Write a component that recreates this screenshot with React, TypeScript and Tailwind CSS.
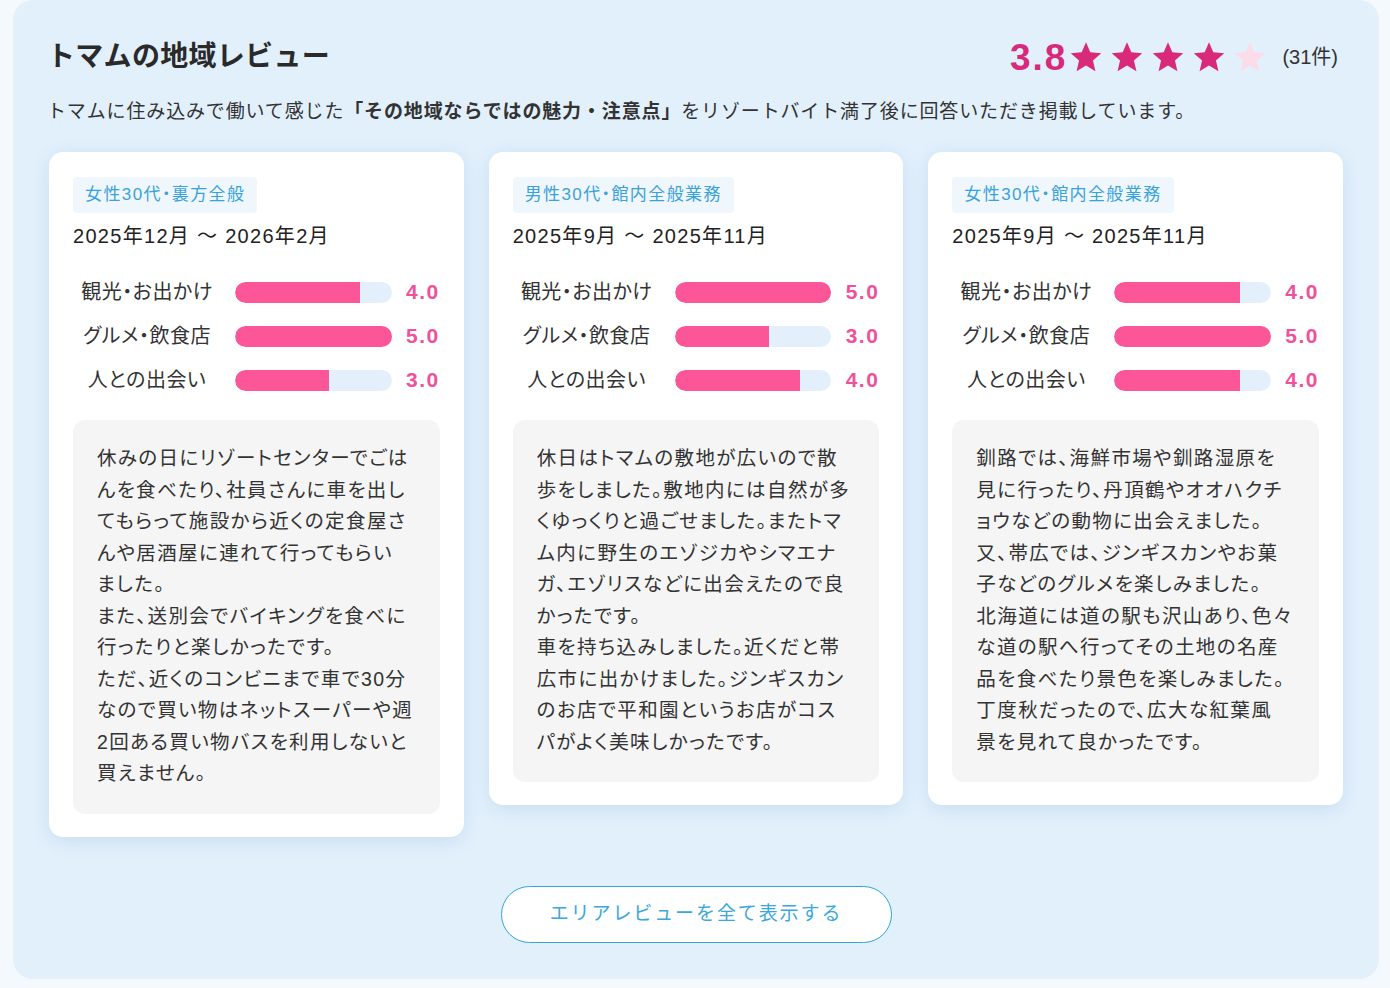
import React from 'react';

type Review = {
  tag: string;
  period: string;
  scores: number[];
  comment: string;
};

const CATEGORIES = ['観光・お出かけ', 'グルメ・飲食店', '人との出会い'];

const REVIEWS: Review[] = [
  {
    tag: '女性30代・裏方全般',
    period: '2025年12月 〜 2026年2月',
    scores: [4, 5, 3],
    comment:
      '休みの日にリゾートセンターでごは\nんを食べたり、社員さんに車を出し\nてもらって施設から近くの定食屋さ\nんや居酒屋に連れて行ってもらい\nました。\nまた、送別会でバイキングを食べに\n行ったりと楽しかったです。\nただ、近くのコンビニまで車で30分\nなので買い物はネットスーパーや週\n2回ある買い物バスを利用しないと\n買えません。',
  },
  {
    tag: '男性30代・館内全般業務',
    period: '2025年9月 〜 2025年11月',
    scores: [5, 3, 4],
    comment:
      '休日はトマムの敷地が広いので散\n歩をしました。敷地内には自然が多\nくゆっくりと過ごせました。またトマ\nム内に野生のエゾジカやシマエナ\nガ、エゾリスなどに出会えたので良\nかったです。\n車を持ち込みしました。近くだと帯\n広市に出かけました。ジンギスカン\nのお店で平和園というお店がコス\nパがよく美味しかったです。',
  },
  {
    tag: '女性30代・館内全般業務',
    period: '2025年9月 〜 2025年11月',
    scores: [4, 5, 4],
    comment:
      '釧路では、海鮮市場や釧路湿原を\n見に行ったり、丹頂鶴やオオハクチ\nョウなどの動物に出会えました。\n又、帯広では、ジンギスカンやお菓\n子などのグルメを楽しみました。\n北海道には道の駅も沢山あり、色々\nな道の駅へ行ってその土地の名産\n品を食べたり景色を楽しみました。\n丁度秋だったので、広大な紅葉風\n景を見れて良かったです。',
  },
];

function Star({ filled }: { filled: boolean }) {
  return (
    <svg viewBox="0 0 24 24" className="h-[34px] w-[34px]">
      <path
        d="M12 1.6l3.05 7.1 7.7.68-5.84 5.07 1.75 7.55L12 18l-6.66 3.99 1.75-7.55-5.84-5.07 7.7-.68z"
        fill={filled ? '#d8297a' : '#fcdce9'}
      />
    </svg>
  );
}

function ReviewCard({ review }: { review: Review }) {
  return (
    <div className="rounded-[14px] bg-white px-[24px] pt-[25px] pb-[23px] shadow-[0_4px_18px_rgba(90,140,190,0.18)]">
      {/* tag + period */}
      <span className="inline-flex h-[36px] items-center rounded-[4px] bg-[#eff7fd] px-[12px] text-[17px] tracking-[1.4px] text-[#3aa2da] [font-feature-settings:'palt']">
        {review.tag}
      </span>
      <div className="mt-[9px] text-[20px] leading-[28px] tracking-[1.3px] text-[#222]">{review.period}</div>

      {/* scores */}
      <div className="mt-[20px]">
        {CATEGORIES.map((label, i) => (
          <div key={label} className="flex h-[44px] items-center">
            <div className="w-[148px] text-center text-[20px] tracking-[0.5px] text-[#333] [font-feature-settings:'palt']">
              {label}
            </div>
            <div className="ml-[14px] h-[21px] flex-1 overflow-hidden rounded-full bg-[#e3f0fb]">
              <div
                className="h-full rounded-l-full bg-[#fd5698]"
                style={{ width: `${(review.scores[i] / 5) * 100}%` }}
              />
            </div>
            <div className="ml-[8px] w-[40px] text-right text-[21px] font-bold tracking-[1.5px] text-[#f0529a]">
              {review.scores[i].toFixed(1)}
            </div>
          </div>
        ))}
      </div>

      {/* comment */}
      <div className="mt-[18px] rounded-[12px] bg-[#f5f5f5] px-[24px] pt-[23px] pb-[24px]">
        <p className="whitespace-pre-line text-[19.5px] leading-[31.5px] tracking-[1.4px] text-[#333] [font-feature-settings:'palt']">
          {review.comment}
        </p>
      </div>
    </div>
  );
}

export default function App() {
  return (
    <div className="min-h-screen bg-[#f4f9fe] pl-[13px] pr-[11px] pb-[9px] font-['Liberation_Sans','Noto_Sans_CJK_JP',sans-serif]">
      <div className="rounded-[20px] bg-[#e2f0fc] px-[36px] pt-[40px] pb-[36px]">
        {/* Header */}
        <div className="flex h-[34px] items-center justify-between">
          <h1 className="-ml-[2px] text-[28px] font-bold leading-[34px] tracking-[0.3px] text-[#2a2a2a]">
            トマムの地域レビュー
          </h1>
          <div className="mr-[5px] flex items-center">
            <span className="mr-[2px] text-[37px] font-bold leading-none tracking-[2px] text-[#d8297a]">3.8</span>
            <div className="flex gap-[7px]">
              {[0, 1, 2, 3, 4].map((n) => (
                <Star key={n} filled={n < 4} />
              ))}
            </div>
            <span className="ml-[15px] text-[20px] text-[#333]">(31件)</span>
          </div>
        </div>
        <p className="-ml-[2px] mt-[24px] text-[19px] leading-[28px] tracking-[0.045em] text-[#333]">
          トマムに住み込みで働いて感じた
          <span className="font-bold">「その地域ならではの魅力・注意点」</span>
          をリゾートバイト満了後に回答いただき掲載しています。
        </p>

        {/* Cards */}
        <div className="mt-[26px] grid grid-cols-3 items-start gap-[25px]">
          {REVIEWS.map((r) => (
            <ReviewCard key={r.tag + r.period} review={r} />
          ))}
        </div>

        <button className="mx-auto mt-[49px] flex h-[57px] w-[391px] items-center justify-center rounded-full border border-[#2ea6da] bg-white text-[19px] tracking-[1.9px] text-[#3aa8dd]">
          エリアレビューを全て表示する
        </button>
      </div>
    </div>
  );
}
